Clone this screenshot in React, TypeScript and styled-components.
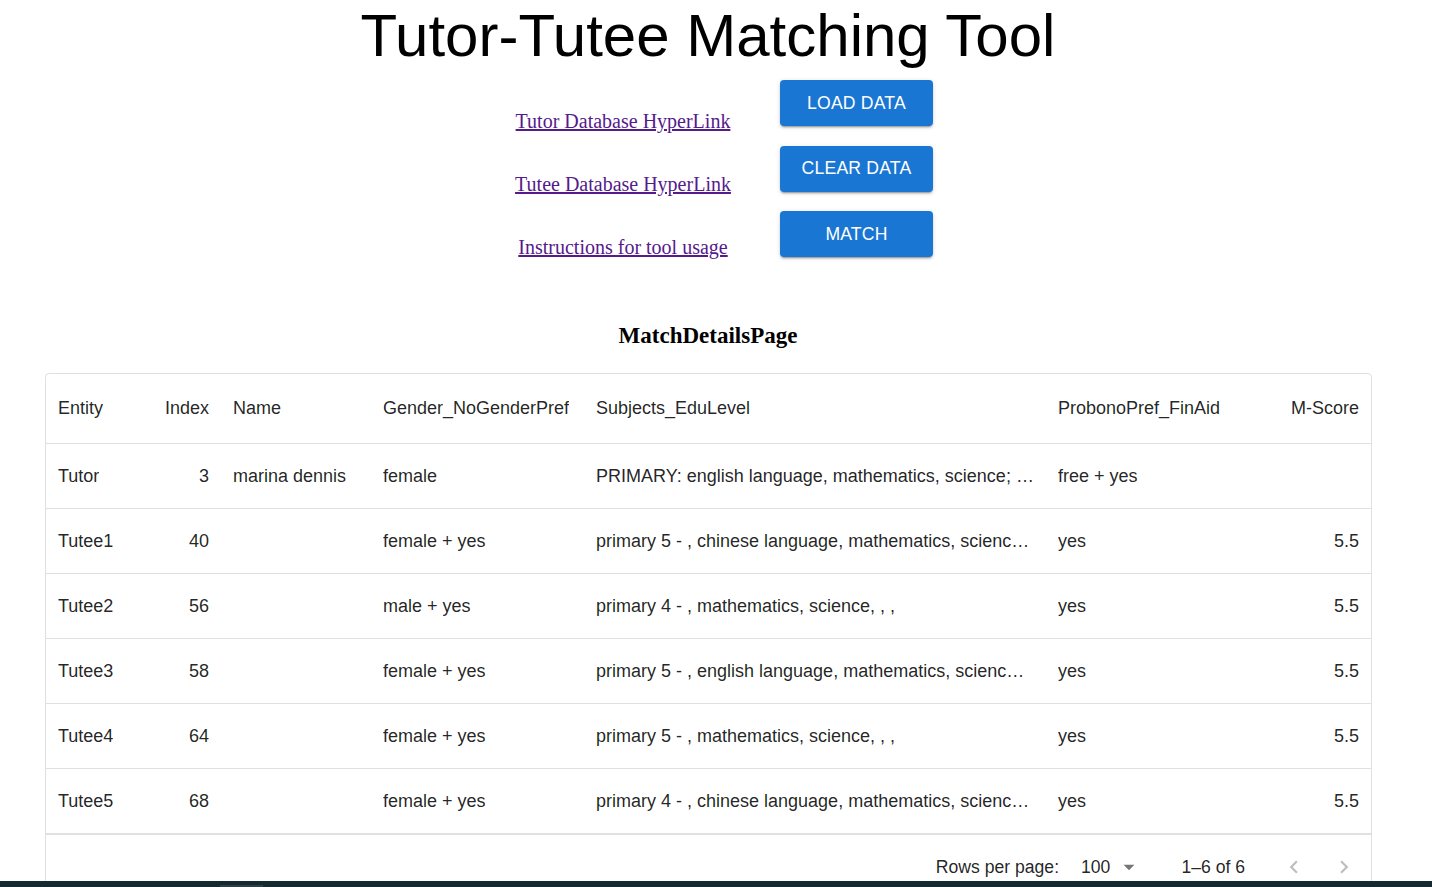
import styled, { createGlobalStyle } from "styled-components";

const GlobalStyle = createGlobalStyle`
  html, body {
    margin: 0;
    padding: 0;
    overflow: hidden;
    background: #fff;
  }
  body {
    font-family: "Liberation Sans", Arial, sans-serif;
  }
`;

const Page = styled.div`
  width: 1416px;
  padding-top: 1px;
`;

const Title = styled.h1`
  margin: 0;
  font-family: "Liberation Sans", Arial, sans-serif;
  font-size: 60px;
  font-weight: 400;
  line-height: normal;
  color: #000;
  text-align: center;
`;

const Controls = styled.div`
  display: flex;
  justify-content: center;
  gap: 49px;
  padding-left: 32px;
  margin-top: 10px;
`;

const LinkColumn = styled.div`
  width: 216px;
  display: flex;
  flex-direction: column;
  align-items: center;
  gap: 40px;
  padding-top: 30px;
`;

const DocLink = styled.a`
  font-family: "Liberation Serif", "Times New Roman", serif;
  font-size: 20px;
  line-height: 23px;
  color: #551a8b;
  text-decoration: underline;
  white-space: nowrap;
`;

const ButtonColumn = styled.div`
  display: flex;
  flex-direction: column;
  gap: 19.5px;
`;

const ActionButton = styled.button`
  width: 153px;
  height: 46px;
  border: 0;
  border-radius: 4px;
  background: #1976d2;
  color: #fff;
  font-family: "Liberation Sans", Arial, sans-serif;
  font-size: 17.6px;
  letter-spacing: 0.2px;
  text-transform: uppercase;
  cursor: pointer;
  box-shadow: 0px 3px 1px -2px rgba(0, 0, 0, 0.2),
    0px 2px 2px 0px rgba(0, 0, 0, 0.14), 0px 1px 5px 0px rgba(0, 0, 0, 0.12);
`;

const SectionTitle = styled.h3`
  margin: 64px 0 0;
  font-family: "Liberation Serif", "Times New Roman", serif;
  font-size: 23px;
  font-weight: 700;
  line-height: normal;
  text-align: center;
  color: #000;
`;

const Grid = styled.div`
  width: 1325px;
  margin: 24px 0 0 45px;
  border: 1px solid #e0e0e0;
  border-radius: 4px;
  color: rgba(0, 0, 0, 0.87);
  font-size: 18px;
`;

const COLS = "101px 74px 150px 213px 462px 200px 125px";

const Row = styled.div<{ $head?: boolean }>`
  display: grid;
  grid-template-columns: ${COLS};
  height: ${(p) => (p.$head ? 69 : 64)}px;
  border-bottom: 1px solid #e0e0e0;
  font-weight: ${(p) => (p.$head ? 500 : 400)};
`;

const Cell = styled.div<{ $right?: boolean }>`
  display: flex;
  align-items: center;
  justify-content: ${(p) => (p.$right ? "flex-end" : "flex-start")};
  padding: 0 12px;
  min-width: 0;
  overflow: hidden;

  span {
    overflow: hidden;
    white-space: nowrap;
    text-overflow: ellipsis;
  }
`;

const Footer = styled.div`
  display: flex;
  align-items: center;
  justify-content: flex-end;
  height: 64px;
  border-top: 1px solid #e0e0e0;
  padding-right: 5px;
  font-size: 17.6px;
`;

const FooterLabel = styled.span`
  margin-right: 22px;
`;

const PageSize = styled.div`
  display: flex;
  align-items: center;
  gap: 6px;
  margin-right: 39px;
`;

const PageInfo = styled.span`
  margin-right: 27px;
`;

const NavButton = styled.button`
  width: 44px;
  height: 44px;
  border: 0;
  background: none;
  padding: 0;
  display: flex;
  align-items: center;
  justify-content: center;
  color: rgba(0, 0, 0, 0.26);
  & + & {
    margin-left: 6px;
  }
`;

const TaskStrip = styled.div`
  position: fixed;
  left: 0;
  right: 0;
  bottom: 0;
  height: 6px;
  background: #142a30;
`;

const TaskTab = styled.div`
  position: absolute;
  left: 220px;
  bottom: 0;
  width: 43px;
  height: 2px;
  background: #2c4046;
`;

type Match = {
  entity: string;
  index: number;
  name: string;
  gender: string;
  subjects: string;
  probono: string;
  score: string;
};

const rows: Match[] = [
  {
    entity: "Tutor",
    index: 3,
    name: "marina dennis",
    gender: "female",
    subjects:
      "PRIMARY: english language, mathematics, science; SECONDARY: english language, mathematics",
    probono: "free + yes",
    score: "",
  },
  {
    entity: "Tutee1",
    index: 40,
    name: "",
    gender: "female + yes",
    subjects: "primary 5 - , chinese language, mathematics, science, , ,",
    probono: "yes",
    score: "5.5",
  },
  {
    entity: "Tutee2",
    index: 56,
    name: "",
    gender: "male + yes",
    subjects: "primary 4 - , mathematics, science, , ,",
    probono: "yes",
    score: "5.5",
  },
  {
    entity: "Tutee3",
    index: 58,
    name: "",
    gender: "female + yes",
    subjects: "primary 5 - , english language, mathematics, science, , ,",
    probono: "yes",
    score: "5.5",
  },
  {
    entity: "Tutee4",
    index: 64,
    name: "",
    gender: "female + yes",
    subjects: "primary 5 - , mathematics, science, , ,",
    probono: "yes",
    score: "5.5",
  },
  {
    entity: "Tutee5",
    index: 68,
    name: "",
    gender: "female + yes",
    subjects: "primary 4 - , chinese language, mathematics, science, , ,",
    probono: "yes",
    score: "5.5",
  },
];

export default function App() {
  return (
    <Page>
      <GlobalStyle />
      <Title>Tutor-Tutee Matching Tool</Title>

      <Controls>
        <LinkColumn>
          <DocLink href="#">Tutor Database HyperLink</DocLink>
          <DocLink href="#">Tutee Database HyperLink</DocLink>
          <DocLink href="#">Instructions for tool usage</DocLink>
        </LinkColumn>
        <ButtonColumn>
          <ActionButton>Load Data</ActionButton>
          <ActionButton>Clear Data</ActionButton>
          <ActionButton>Match</ActionButton>
        </ButtonColumn>
      </Controls>

      <SectionTitle>MatchDetailsPage</SectionTitle>

      <Grid>
        <Row $head>
          <Cell><span>Entity</span></Cell>
          <Cell $right><span>Index</span></Cell>
          <Cell><span>Name</span></Cell>
          <Cell><span>Gender_NoGenderPref</span></Cell>
          <Cell><span>Subjects_EduLevel</span></Cell>
          <Cell><span>ProbonoPref_FinAid</span></Cell>
          <Cell $right><span>M-Score</span></Cell>
        </Row>
        {rows.map((r) => (
          <Row key={r.entity}>
            <Cell><span>{r.entity}</span></Cell>
            <Cell $right><span>{r.index}</span></Cell>
            <Cell><span>{r.name}</span></Cell>
            <Cell><span>{r.gender}</span></Cell>
            <Cell><span>{r.subjects}</span></Cell>
            <Cell><span>{r.probono}</span></Cell>
            <Cell $right><span>{r.score}</span></Cell>
          </Row>
        ))}
        <Footer>
          <FooterLabel>Rows per page:</FooterLabel>
          <PageSize>
            <span>100</span>
            <svg width="26" height="26" viewBox="0 0 24 24" fill="rgba(0,0,0,0.54)">
              <path d="M7 10l5 5 5-5z" />
            </svg>
          </PageSize>
          <PageInfo>1–6 of 6</PageInfo>
          <NavButton disabled aria-label="previous page">
            <svg width="26" height="26" viewBox="0 0 24 24" fill="currentColor">
              <path d="M15.41 16.59L10.83 12l4.58-4.59L14 6l-6 6 6 6 1.41-1.41z" />
            </svg>
          </NavButton>
          <NavButton disabled aria-label="next page">
            <svg width="26" height="26" viewBox="0 0 24 24" fill="currentColor">
              <path d="M8.59 16.59L13.17 12 8.59 7.41 10 6l6 6-6 6-1.41-1.41z" />
            </svg>
          </NavButton>
        </Footer>
      </Grid>

      <TaskStrip>
        <TaskTab />
      </TaskStrip>
    </Page>
  );
}
